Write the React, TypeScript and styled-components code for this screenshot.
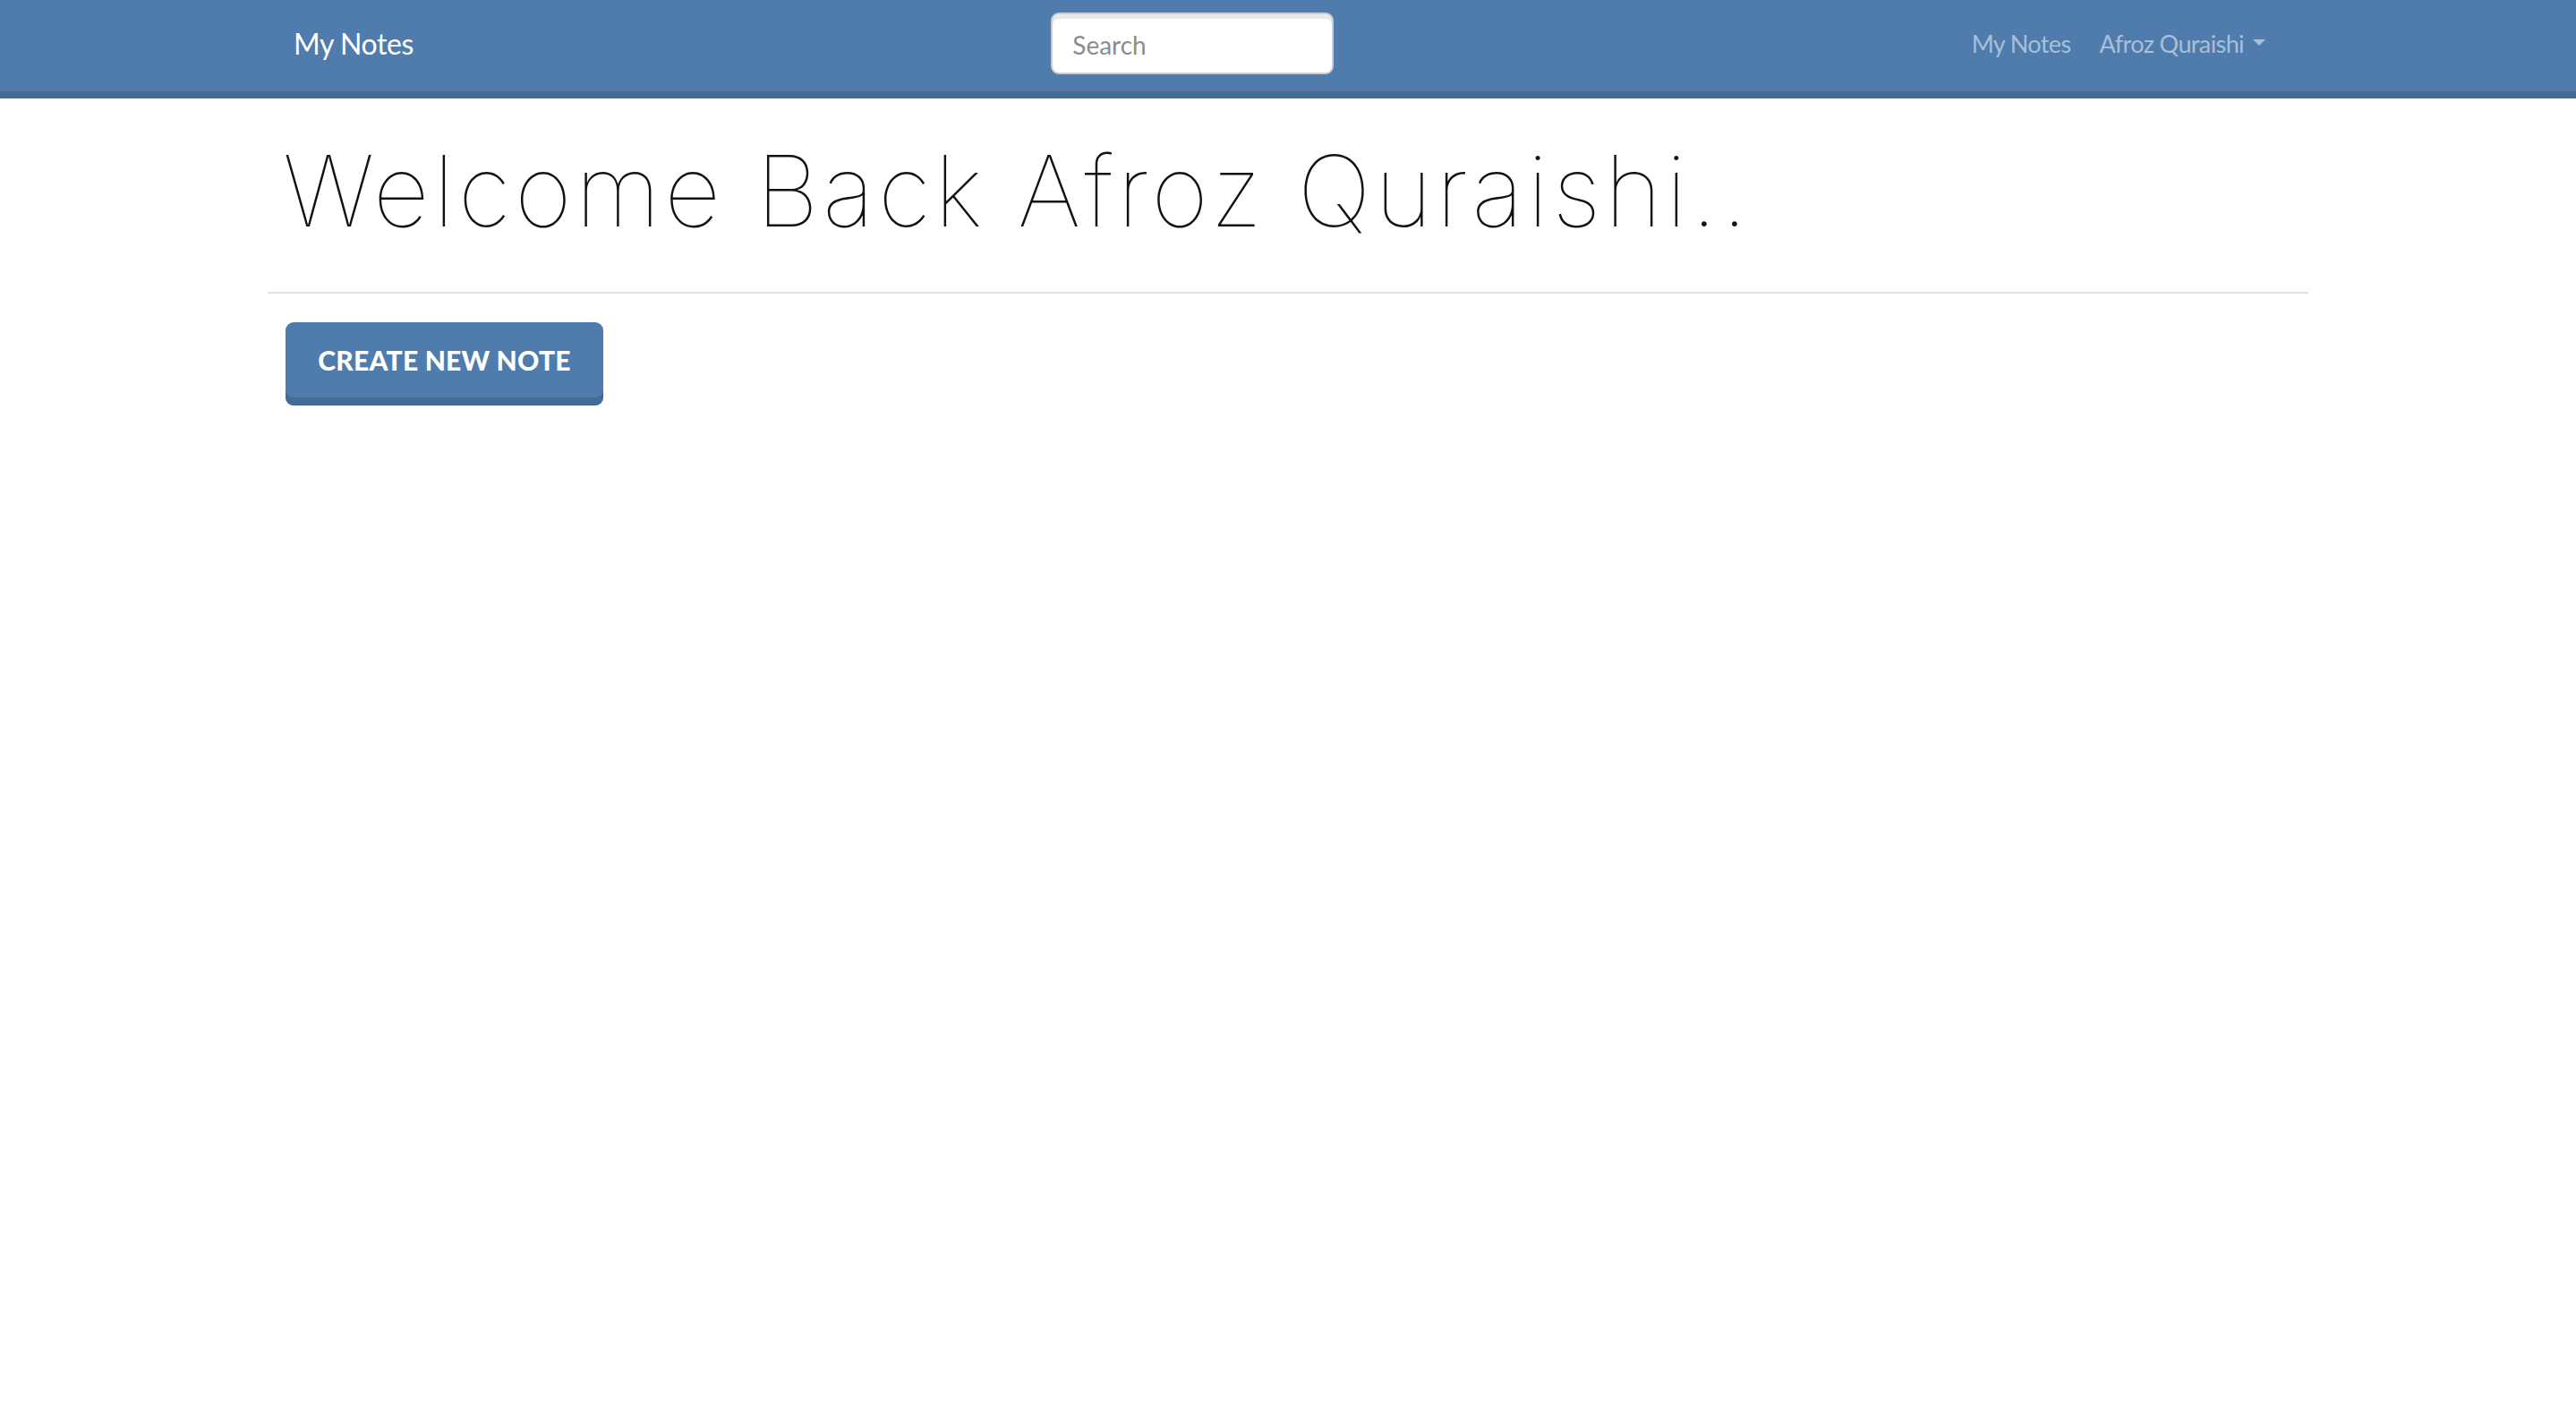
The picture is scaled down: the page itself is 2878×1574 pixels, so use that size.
import React from "react";
import styled, { createGlobalStyle } from "styled-components";

const Global = createGlobalStyle`
  html, body { margin: 0; padding: 0; background: #ffffff; }
  body { font-family: Lato, "Liberation Sans", sans-serif; color: #222; }
  * { box-sizing: border-box; }
`;

const NavBar = styled.nav`
  box-sizing: content-box;
  height: 97px;
  padding: 0 347px 5px 328px;
  background: #4f7cac;
  border-bottom: 8px solid #436b94;
  display: flex;
  align-items: center;
`;

const Brand = styled.a`
  font-family: Lato, "Liberation Sans", sans-serif;
  font-size: 32px;
  color: #ffffff;
  text-decoration: none;
  letter-spacing: -0.4px;
`;

const SearchForm = styled.form`
  margin: 0 auto;
  display: flex;
`;

const SearchInput = styled.input`
  width: 316px;
  height: 69px;
  border: 2px solid #c9ced4;
  border-radius: 9px;
  background: #ffffff;
  box-shadow: inset 0 5px 0 #e9e9e9;
  padding: 2px 22px 0;
  font-family: Lato, "Liberation Sans", sans-serif;
  font-size: 28px;
  color: #555;
  outline: none;
  &::placeholder { color: #8c8c8c; }
`;

const NavLinks = styled.ul`
  list-style: none;
  margin: 0;
  padding: 0;
  display: flex;
  align-items: center;
  gap: 32px;
`;

const NavLink = styled.a`
  font-family: Lato, "Liberation Sans", sans-serif;
  font-size: 27px;
  letter-spacing: -0.6px;
  color: #a8bfd8;
  text-decoration: none;
  display: flex;
  align-items: center;
`;

const Caret = styled.span`
  display: inline-block;
  width: 0;
  height: 0;
  margin-left: 10px;
  margin-top: -2px;
  border-top: 7px solid #a8bfd8;
  border-left: 7px solid transparent;
  border-right: 7px solid transparent;
`;

const Main = styled.main`
  width: 2280px;
  margin: 0 auto;
`;

const Heading = styled.h1`
  margin: 37px 0 0;
  padding-left: 17px;
  font-family: Inter, Lato, "Liberation Sans", sans-serif;
  font-weight: 100;
  font-size: 110px;
  line-height: 132px;
  color: #111;
  letter-spacing: 4.2px;
`;

const Rule = styled.hr`
  margin: 47px 0 0;
  border: 0;
  height: 2px;
  background: #e2e2e2;
`;

const Actions = styled.div`
  padding: 32px 0 0 20px;
`;

const PrimaryButton = styled.button`
  width: 355px;
  height: 93px;
  border: 0;
  border-radius: 9px;
  background: #4f7cac;
  box-shadow: inset 0 -9px 0 #436b94;
  color: #ffffff;
  font-family: Lato, "Liberation Sans", sans-serif;
  font-weight: 900;
  font-size: 30px;
  letter-spacing: 0.2px;
  text-transform: uppercase;
  padding: 0 0 9px;
  cursor: pointer;
`;

export default function App() {
  return (
    <>
      <Global />
      <NavBar>
        <Brand href="#">My Notes</Brand>
        <SearchForm onSubmit={(e) => e.preventDefault()}>
          <SearchInput type="text" placeholder="Search" />
        </SearchForm>
        <NavLinks>
          <li>
            <NavLink href="#">My Notes</NavLink>
          </li>
          <li>
            <NavLink href="#">
              Afroz Quraishi
              <Caret />
            </NavLink>
          </li>
        </NavLinks>
      </NavBar>
      <Main>
        <Heading>Welcome Back Afroz Quraishi..</Heading>
        <Rule />
        <Actions>
          <PrimaryButton>Create New Note</PrimaryButton>
        </Actions>
      </Main>
    </>
  );
}
